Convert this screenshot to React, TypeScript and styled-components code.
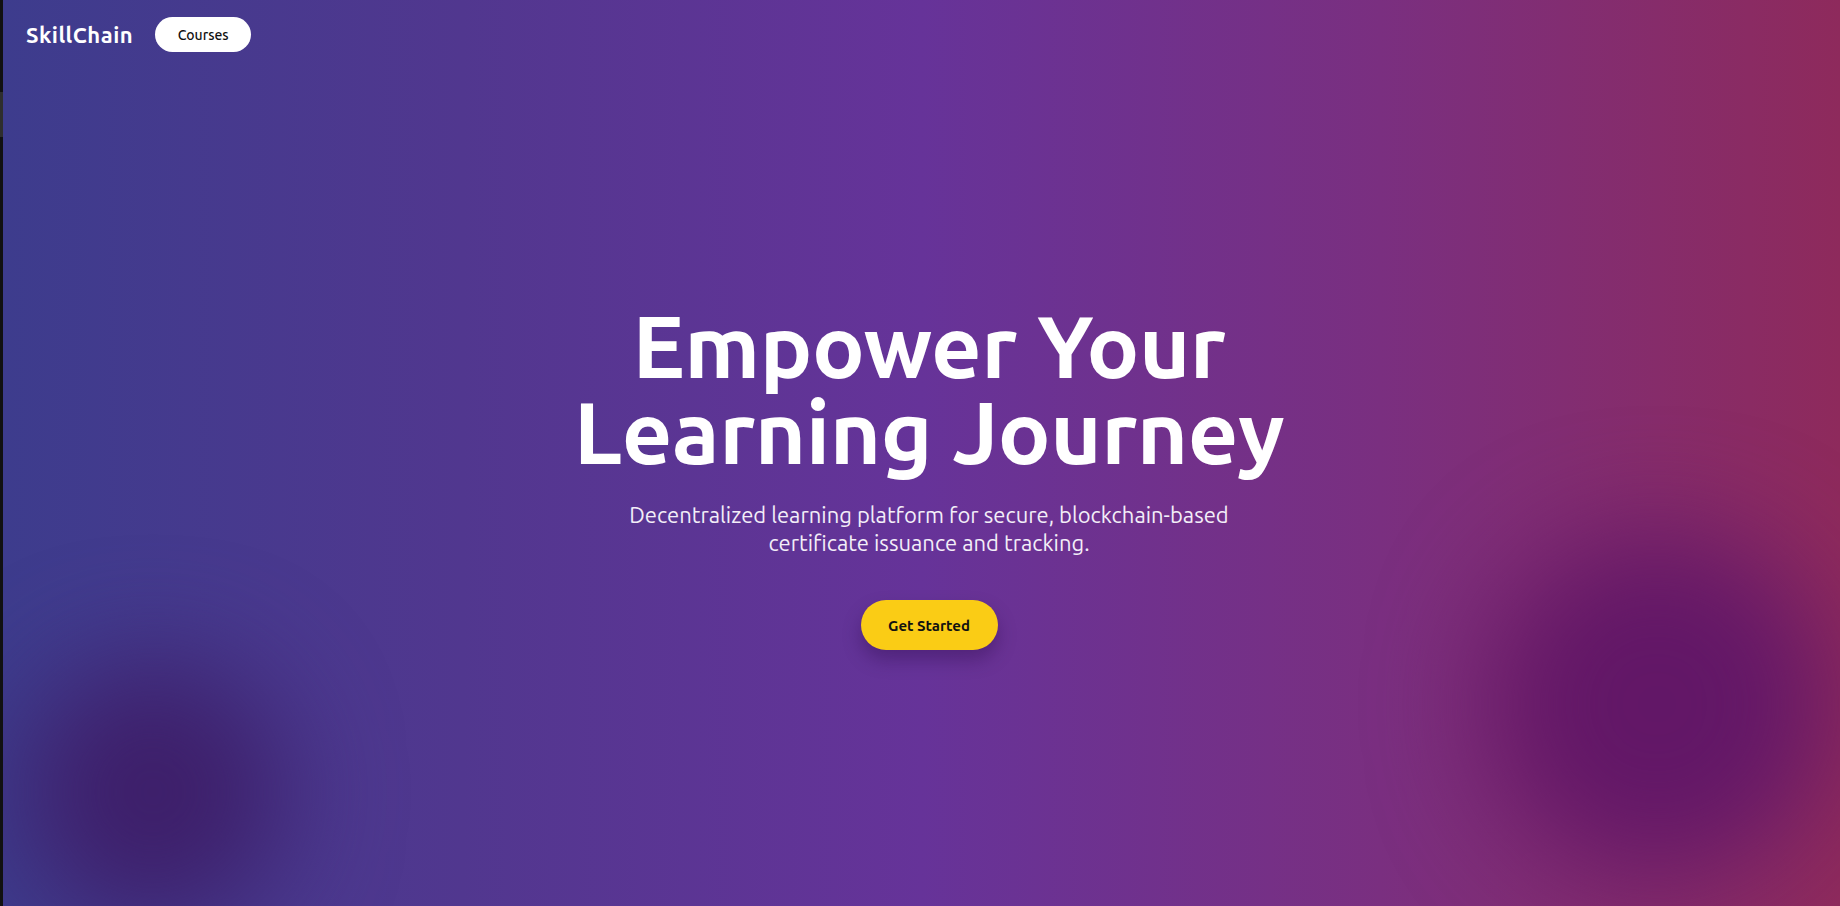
import React from "react";
import styled, { createGlobalStyle } from "styled-components";

const GlobalStyle = createGlobalStyle`
  html, body { margin: 0; padding: 0; background: #111111; }
  body { font-family: "Ubuntu", "Open Sans", "Noto Sans", sans-serif; }
  * { box-sizing: border-box; }
`;

const Shell = styled.div`
  display: flex;
  width: 100%;
  height: 906px;
  background: #111111;
`;

const Rail = styled.div`
  position: relative;
  width: 3px;
  flex: 0 0 3px;
  background: #111111;
`;

const RailThumb = styled.div`
  position: absolute;
  left: 0;
  top: 92px;
  width: 3px;
  height: 45px;
  background: #2e2e2e;
`;

const Page = styled.main`
  position: relative;
  flex: 1;
  display: flex;
  flex-direction: column;
  overflow: hidden;
  background: linear-gradient(to right, #3d3c8d 0%, #51378f 25%, #663399 50%, #7a2f80 75%, #8e2a5c 100%);
  color: #ffffff;
`;

const Blob = styled.div<{ $size: number; $color: string }>`
  position: absolute;
  width: ${(p) => p.$size}px;
  height: ${(p) => p.$size}px;
  border-radius: 50%;
  background: ${(p) => p.$color};
  filter: blur(56px);
  pointer-events: none;
`;

const LeftBlob = styled(Blob)`
  left: 20px;
  top: 662px;
`;

const RightBlob = styled(Blob)`
  left: 1484px;
  top: 534px;
`;

const Nav = styled.nav`
  position: relative;
  z-index: 1;
  display: flex;
  align-items: center;
  gap: 22px;
  padding: 17px 23px 0;
`;

const Logo = styled.div`
  font-size: 22px;
  font-weight: 700;
  letter-spacing: 0.5px;
  color: #ffffff;
`;

const NavButton = styled.button`
  height: 35px;
  width: 96px;
  border: none;
  border-radius: 999px;
  background: #ffffff;
  color: #111111;
  font-family: inherit;
  font-size: 14px;
  font-weight: 500;
  cursor: pointer;
`;

const Hero = styled.section`
  position: relative;
  z-index: 1;
  flex: 1;
  display: flex;
  flex-direction: column;
  align-items: center;
  padding: 251px 0 0 15px;
  text-align: center;
`;

const Title = styled.h1`
  margin: 0;
  font-size: 88px;
  line-height: 86px;
  font-weight: 700;
  letter-spacing: -0.5px;
  color: #ffffff;
`;

const Subtitle = styled.p`
  margin: 26px 0 0;
  max-width: 620px;
  font-size: 22px;
  line-height: 28px;
  font-weight: 400;
  color: #f3eef8;
`;

const CTA = styled.button`
  margin-top: 43px;
  height: 50px;
  width: 137px;
  border: none;
  border-radius: 999px;
  background: #facc15;
  color: #111111;
  font-family: inherit;
  font-size: 15px;
  font-weight: 700;
  box-shadow: 0 10px 18px rgba(40, 10, 70, 0.35);
  cursor: pointer;
`;

export default function App() {
  return (
    <>
      <GlobalStyle />
      <Shell>
        <Rail>
          <RailThumb />
        </Rail>
        <Page>
          <LeftBlob $size={260} $color="#3e1f6a" />
          <RightBlob $size={340} $color="#621767" />
          <Nav>
            <Logo>SkillChain</Logo>
            <NavButton>Courses</NavButton>
          </Nav>
          <Hero>
            <Title>
              Empower Your
              <br />
              Learning Journey
            </Title>
            <Subtitle>
              Decentralized learning platform for secure, blockchain-based certificate issuance and tracking.
            </Subtitle>
            <CTA>Get Started</CTA>
          </Hero>
        </Page>
      </Shell>
    </>
  );
}
